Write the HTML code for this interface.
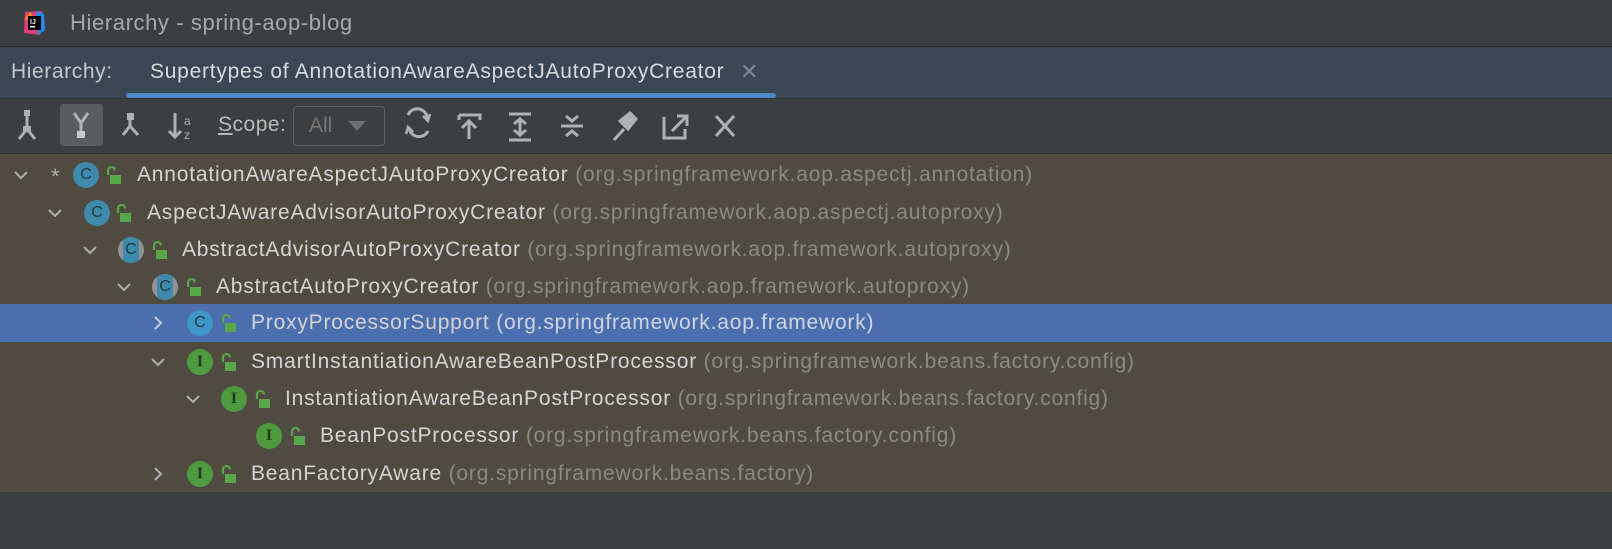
<!DOCTYPE html>
<html><head><meta charset="utf-8"><style>
*{margin:0;padding:0;box-sizing:border-box}
body{width:1612px;height:549px;background:#3c3f41;font-family:"Liberation Sans",sans-serif;position:relative;overflow:hidden;color:#bbb}
.abs{position:absolute}
#title{left:0;top:0;width:1612px;height:47px;background:#3c3f41;border-bottom:1px solid #2b2b2b}
#tabs{left:0;top:47px;width:1612px;height:52px;background:#3b4654;border-bottom:1px solid #323232}
#tool{left:0;top:99px;width:1612px;height:55px;background:#3c3f41;border-bottom:1px solid #323232}
#tree{left:0;top:154px;width:1612px;height:338px;background:#4f4b41}
.row{position:absolute;left:0;width:1612px;height:38px;font-size:21px;letter-spacing:0.8px;line-height:38px;white-space:nowrap}
.row .t{position:absolute;color:#d4d4d4}
.row .p{color:#8c8a84}
.sel{background:#4b6eaf}
.sel .p{color:#d0d6e0}
.chev{position:absolute;top:11px}
.ic{position:absolute;top:6px;width:26px;height:26px;border-radius:50%;font-size:16px;line-height:26px;text-align:center;color:#213a44;font-family:"Liberation Sans",sans-serif;letter-spacing:0;overflow:hidden}
.c{background:#3f8aaa}
.i{background:#4f9a3e;color:#1f3a1a;font-family:"Liberation Serif",serif;font-weight:bold}
.lock{position:absolute;top:10px}
</style></head><body>
<div id="title" class="abs">
  <svg class="abs" style="left:22px;top:10px" width="24" height="26" viewBox="0 0 24 26"><path d="M3 2 L20 1 L23 14 L18 25 L2 23 Z" fill="#e0407a"/><path d="M14 1 L22 4 L23 20 L16 25Z" fill="#1f8df0"/><path d="M2 10 L8 2 L12 8Z" fill="#f58a1f"/><rect x="6" y="6" width="13" height="14" fill="#000"/><text x="8" y="14" font-size="7" fill="#fff" font-family="Liberation Sans" font-weight="bold">IJ</text><rect x="8" y="16" width="5" height="1.5" fill="#fff"/></svg>
  <div class="abs" style="left:70px;top:10px;font-size:22px;letter-spacing:0.6px;color:#a9a9a9">Hierarchy - spring-aop-blog</div>
</div>
<div id="tabs" class="abs">
  <div class="abs" style="left:11px;top:13px;font-size:21px;letter-spacing:0.6px;color:#c3c7cc">Hierarchy:</div>
  <div class="abs" style="left:150px;top:13px;font-size:21px;letter-spacing:0.75px;color:#d6dbe0">Supertypes of AnnotationAwareAspectJAutoProxyCreator</div>
  <div class="abs" style="left:740px;top:12px;font-size:22px;color:#7d8793">✕</div>
  <div class="abs" style="left:126px;top:46px;width:650px;height:5px;border-radius:3px;background:#4a88c7"></div>
</div>
<div id="tool" class="abs">
  <div class="abs" style="left:60px;top:5px;width:43px;height:42px;background:#5a5d60;border-radius:3px"></div>
</div>
<svg class="abs" style="left:0;top:99px" width="760" height="55" viewBox="0 0 760 55" fill="none" stroke="#afb1b3" stroke-width="3">
  <g><rect x="24" y="11" width="6" height="6" fill="#afb1b3" stroke="none"/><path d="M27 17 V30 M27 30 L19 40 M27 30 L35 40"/><rect x="23" y="27" width="8" height="6" fill="#afb1b3" stroke="none"/></g>
  <g><path d="M74 14 L81 24 L88 14 M81 24 V38"/><rect x="77" y="32" width="8" height="7" fill="#c7c9cb" stroke="none"/></g>
  <g><rect x="127" y="14" width="7" height="7" fill="#afb1b3" stroke="none"/><path d="M130 21 V27 L123 36 M130 27 L138 36"/></g>
  <g><path d="M175 14 V38 M169 32 L175 38 L181 32"/><text x="184" y="26" font-size="12" fill="#afb1b3" stroke="none" font-family="Liberation Sans">a</text><text x="184" y="40" font-size="12" fill="#afb1b3" stroke="none" font-family="Liberation Sans">z</text></g>
  <path d="M408 16 A10 10 0 0 1 427 22 M428 32 A10 10 0 0 1 409 28"/><path d="M423 17 L428 22 L430 15 M413 33 L408 28 L406 35" stroke-width="2.5"/>
  <path d="M459 16 H480 V21 M459 16 V21 M469 40 V22 M462 29 L469 22 L476 29"/>
  <path d="M509 15 H531 M509 41 H531 M520 20 V36 M514 25 L520 20 L526 25 M514 31 L520 36 L526 31"/>
  <path d="M561 27 H583 M566 17 L572 22 L578 17 M566 37 L572 32 L578 37"/>
  <path d="M614 41 L624 30 M620 22 L630 14 L636 20 L628 30 Z" fill="#afb1b3"/>
  <path d="M664 18 V39 H685 V30 M672 32 L686 18 M677 17 H687 V27"/>
  <path d="M716 17 L734 37 M734 17 L716 37"/>
</svg>
<div class="abs" style="left:218px;top:113px;font-size:21px;letter-spacing:0.5px;color:#bbb"><u>S</u>cope:</div>
<div class="abs" style="left:293px;top:106px;width:92px;height:40px;border:1.5px solid #5e6164;border-radius:4px"></div>
<div class="abs" style="left:309px;top:114px;font-size:21px;color:#777">All</div>
<svg class="abs" style="left:348px;top:121px" width="18" height="10"><path d="M0 0 H18 L9 10Z" fill="#6c6e70"/></svg>

<div id="tree" class="abs">
<div class="row" style="top:2px">
  <svg class="chev" style="left:13px" width="16" height="16"><path d="M2 5 L8 11 L14 5" stroke="#b0b0b0" stroke-width="2" fill="none"/></svg>
  <div class="abs" style="left:51px;top:2px;font-size:22px;color:#b0b0b0">*</div>
  <div class="ic c" style="left:73px">C</div>
  <svg class="lock" style="left:104px" width="18" height="18"><path d="M4 9 V4.5 A3.5 3.5 0 0 1 11 4.5" stroke="#5aa64a" stroke-width="2.2" fill="none"/><rect x="6" y="9" width="11" height="9" fill="#5aa64a"/></svg>
  <div class="t" style="left:137px">AnnotationAwareAspectJAutoProxyCreator <span class="p">(org.springframework.aop.aspectj.annotation)</span></div>
</div>
<div class="row" style="top:40px">
  <svg class="chev" style="left:47px" width="16" height="16"><path d="M2 5 L8 11 L14 5" stroke="#b0b0b0" stroke-width="2" fill="none"/></svg>
  <div class="ic c" style="left:84px">C</div>
  <svg class="lock" style="left:114px" width="18" height="18"><path d="M4 9 V4.5 A3.5 3.5 0 0 1 11 4.5" stroke="#5aa64a" stroke-width="2.2" fill="none"/><rect x="6" y="9" width="11" height="9" fill="#5aa64a"/></svg>
  <div class="t" style="left:147px">AspectJAwareAdvisorAutoProxyCreator <span class="p">(org.springframework.aop.aspectj.autoproxy)</span></div>
</div>
<div class="row" style="top:77px">
  <svg class="chev" style="left:82px" width="16" height="16"><path d="M2 5 L8 11 L14 5" stroke="#b0b0b0" stroke-width="2" fill="none"/></svg>
  <div class="ic" style="left:118px;background:#8f9396"><div style="position:absolute;left:5px;top:0;width:16px;height:26px;background:#3f8aaa"></div><span style="position:relative">C</span></div>
  <svg class="lock" style="left:150px" width="18" height="18"><path d="M4 9 V4.5 A3.5 3.5 0 0 1 11 4.5" stroke="#5aa64a" stroke-width="2.2" fill="none"/><rect x="6" y="9" width="11" height="9" fill="#5aa64a"/></svg>
  <div class="t" style="left:182px">AbstractAdvisorAutoProxyCreator <span class="p">(org.springframework.aop.framework.autoproxy)</span></div>
</div>
<div class="row" style="top:114px">
  <svg class="chev" style="left:116px" width="16" height="16"><path d="M2 5 L8 11 L14 5" stroke="#b0b0b0" stroke-width="2" fill="none"/></svg>
  <div class="ic" style="left:152px;background:#8f9396"><div style="position:absolute;left:5px;top:0;width:16px;height:26px;background:#3f8aaa"></div><span style="position:relative">C</span></div>
  <svg class="lock" style="left:184px" width="18" height="18"><path d="M4 9 V4.5 A3.5 3.5 0 0 1 11 4.5" stroke="#5aa64a" stroke-width="2.2" fill="none"/><rect x="6" y="9" width="11" height="9" fill="#5aa64a"/></svg>
  <div class="t" style="left:216px">AbstractAutoProxyCreator <span class="p">(org.springframework.aop.framework.autoproxy)</span></div>
</div>
<div class="row sel" style="top:150px">
  <svg class="chev" style="left:150px" width="16" height="16"><path d="M5 2 L11 8 L5 14" stroke="#c8cdd8" stroke-width="2" fill="none"/></svg>
  <div class="ic c" style="left:187px;background:#3f97c9">C</div>
  <svg class="lock" style="left:219px" width="18" height="18"><path d="M4 9 V4.5 A3.5 3.5 0 0 1 11 4.5" stroke="#5aa64a" stroke-width="2.2" fill="none"/><rect x="6" y="9" width="11" height="9" fill="#5aa64a"/></svg>
  <div class="t" style="left:251px">ProxyProcessorSupport <span class="p">(org.springframework.aop.framework)</span></div>
</div>
<div class="row" style="top:189px">
  <svg class="chev" style="left:150px" width="16" height="16"><path d="M2 5 L8 11 L14 5" stroke="#b0b0b0" stroke-width="2" fill="none"/></svg>
  <div class="ic i" style="left:187px">I</div>
  <svg class="lock" style="left:219px" width="18" height="18"><path d="M4 9 V4.5 A3.5 3.5 0 0 1 11 4.5" stroke="#5aa64a" stroke-width="2.2" fill="none"/><rect x="6" y="9" width="11" height="9" fill="#5aa64a"/></svg>
  <div class="t" style="left:251px">SmartInstantiationAwareBeanPostProcessor <span class="p">(org.springframework.beans.factory.config)</span></div>
</div>
<div class="row" style="top:226px">
  <svg class="chev" style="left:185px" width="16" height="16"><path d="M2 5 L8 11 L14 5" stroke="#b0b0b0" stroke-width="2" fill="none"/></svg>
  <div class="ic i" style="left:221px">I</div>
  <svg class="lock" style="left:253px" width="18" height="18"><path d="M4 9 V4.5 A3.5 3.5 0 0 1 11 4.5" stroke="#5aa64a" stroke-width="2.2" fill="none"/><rect x="6" y="9" width="11" height="9" fill="#5aa64a"/></svg>
  <div class="t" style="left:285px">InstantiationAwareBeanPostProcessor <span class="p">(org.springframework.beans.factory.config)</span></div>
</div>
<div class="row" style="top:263px">
  <div class="ic i" style="left:256px">I</div>
  <svg class="lock" style="left:288px" width="18" height="18"><path d="M4 9 V4.5 A3.5 3.5 0 0 1 11 4.5" stroke="#5aa64a" stroke-width="2.2" fill="none"/><rect x="6" y="9" width="11" height="9" fill="#5aa64a"/></svg>
  <div class="t" style="left:320px">BeanPostProcessor <span class="p">(org.springframework.beans.factory.config)</span></div>
</div>
<div class="row" style="top:301px">
  <svg class="chev" style="left:150px" width="16" height="16"><path d="M5 2 L11 8 L5 14" stroke="#b0b0b0" stroke-width="2" fill="none"/></svg>
  <div class="ic i" style="left:187px">I</div>
  <svg class="lock" style="left:219px" width="18" height="18"><path d="M4 9 V4.5 A3.5 3.5 0 0 1 11 4.5" stroke="#5aa64a" stroke-width="2.2" fill="none"/><rect x="6" y="9" width="11" height="9" fill="#5aa64a"/></svg>
  <div class="t" style="left:251px">BeanFactoryAware <span class="p">(org.springframework.beans.factory)</span></div>
</div>
</div>
</body></html>
